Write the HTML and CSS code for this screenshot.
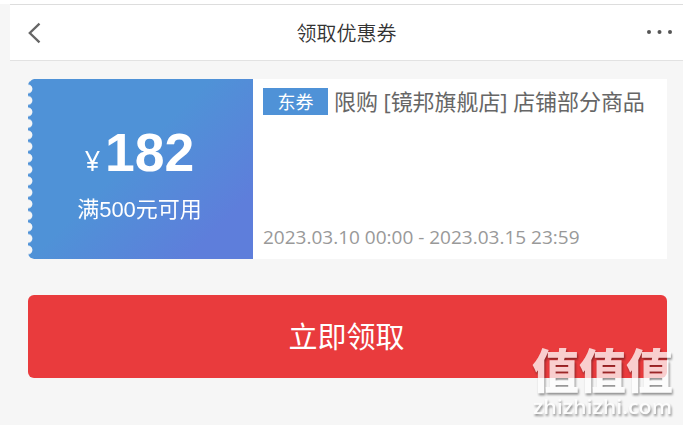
FILE: index.html
```html
<!DOCTYPE html>
<html lang="zh-CN">
<head>
<meta charset="utf-8">
<title>领取优惠券</title>
<link rel="stylesheet" href="styles.css">
</head>
<body>
<header class="bar">
  <svg class="back" width="14" height="22" viewBox="0 0 14 22"><path d="M12.5 1.6 2.8 11l9.7 9.4" fill="none" stroke="#666" stroke-width="2.3"/></svg>
  <h1 class="title">领取优惠券</h1>
  <svg class="more" width="28" height="6" viewBox="0 0 28 6" fill="#555"><circle cx="3" cy="2" r="2"/><circle cx="13.5" cy="2" r="2"/><circle cx="24" cy="2" r="2"/></svg>
</header>
<main class="content">
  <section class="coupon">
    <div class="value">
      <div class="price"><span class="yen">¥</span><strong class="amount">182</strong></div>
      <div class="limit">满500元可用</div>
    </div>
    <div class="detail">
      <div class="heading"><span class="tag">东券</span><span class="name">限购 [镜邦旗舰店] 店铺部分商品</span></div>
      <div class="period"><span class="dates">2023.03.10 00:00 - 2023.03.15 23:59</span></div>
    </div>
  </section>
  <button class="claim">立即领取</button>
</main>
<div class="mark">
  <svg width="160" height="88" viewBox="0 0 160 88">
    <text class="mark-cn" x="13" y="53" textLength="141" lengthAdjust="spacingAndGlyphs">值值值</text>
    <text class="mark-en" x="14" y="79" textLength="139" lengthAdjust="spacingAndGlyphs">zhizhizhi.com</text>
  </svg>
</div>
</body>
</html>
```

FILE: styles.css
```css
* { box-sizing: border-box; }
body {
  margin: 0;
  height: 425px;
  overflow: hidden;
  background: #f6f6f6;
  border-top: 4px solid #fff;
  font-family: "Open Sans", "Noto Sans CJK SC", sans-serif;
}
.bar {
  display: flex;
  align-items: center;
  justify-content: space-between;
  height: 57px;
  margin-left: 10px;
  padding: 0 9px 0 17px;
  background: #fff;
  border-top: 1px solid #ddd;
  border-bottom: 1px solid #e2e2e2;
}
.back, .more { display: block; }
.title {
  margin: 2px 0 0 6px;
  font-size: 20px;
  line-height: 28px;
  font-weight: 350;
  color: #333;
}
.content { padding: 18px 16px 0 28px; }
.coupon {
  display: flex;
  height: 180px;
  background: linear-gradient(to right, transparent 225px, #fff 225px);
}
.value {
  width: 225px;
  padding-top: 44px;
  padding-right: 2px;
  border-radius: 6px 0 0 6px;
  color: #fff;
  text-align: center;
  background: linear-gradient(135deg, #4f92d7 0%, #4f92d7 45%, #5e7edb 84%, #5e7edb 100%);
  -webkit-mask: radial-gradient(circle at 0 50%, transparent 4px, #000 4.8px) 0 4.2px / 100% 11.5px;
  mask: radial-gradient(circle at 0 50%, transparent 4px, #000 4.8px) 0 4.2px / 100% 11.5px;
}
.price {
  display: flex;
  justify-content: center;
  align-items: baseline;
  gap: 5px;
  height: 60px;
  line-height: 60px;
  font-family: "Liberation Sans", sans-serif;
}
.yen { font-family: "Open Sans", sans-serif; font-size: 27px; }
.amount { font-size: 53.5px; }
.limit {
  margin-top: 11px;
  font: 22px/32px "Liberation Sans", "Noto Sans CJK SC", sans-serif;
}
.detail {
  flex: 1;
  display: flex;
  flex-direction: column;
  justify-content: space-between;
  padding: 9px 10px 7px;
}
.heading { display: flex; align-items: center; gap: 6px; white-space: nowrap; }
.tag {
  width: 65px;
  height: 27px;
  background: #4f92d7;
  color: #fff;
  font-size: 18px;
  line-height: 28px;
  text-align: center;
}
.name { font-size: 22px; line-height: 27px; letter-spacing: -.06px; color: #666; }
.period { font-size: 19px; line-height: 30px; color: #999; white-space: nowrap; }
.claim {
  display: block;
  width: 100%;
  height: 83px;
  margin-top: 36px;
  padding: 0 2px 3px 0;
  border: 0;
  border-radius: 6px;
  background: #e93b3d;
  color: #fff;
  font: 29px/80px "Noto Sans CJK SC", sans-serif;
}
.mark {
  position: absolute;
  left: 519px;
  top: 335px;
  opacity: .75;
  filter: drop-shadow(1px 2px 1px rgba(0, 0, 0, .55));
}
.mark svg { display: block; }
.mark-cn { font: 900 47px "Liberation Sans", "Noto Sans CJK SC", sans-serif; fill: #fff; }
.mark-en { font: 600 20px "Open Sans", sans-serif; fill: #fff; }
```
